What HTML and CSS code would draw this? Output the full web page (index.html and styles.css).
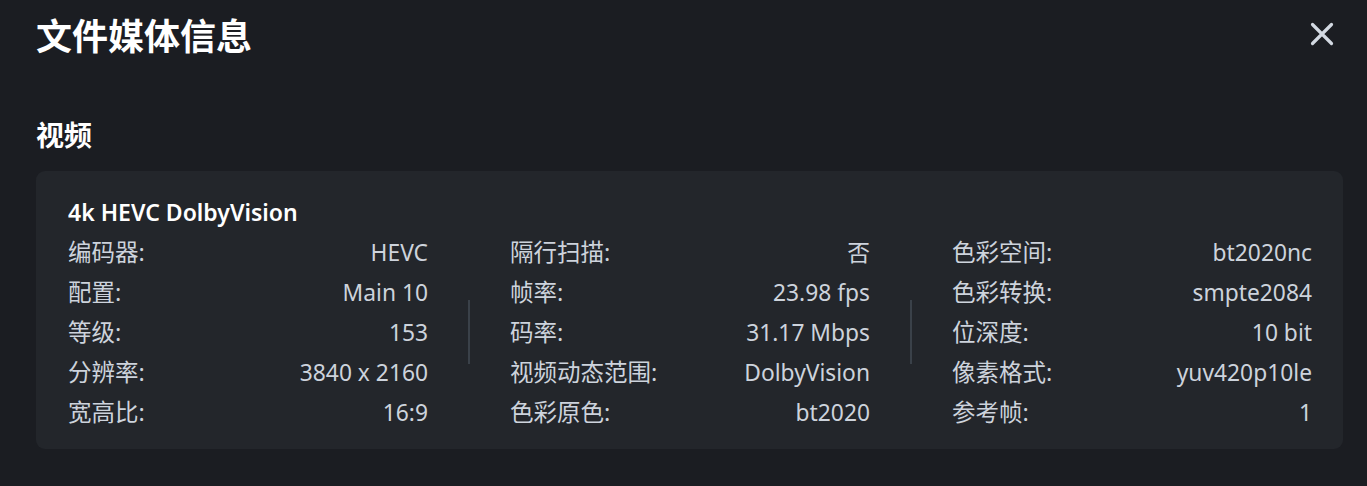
FILE: index.html
```html
<!DOCTYPE html>
<html lang="zh-CN">
<head>
<meta charset="utf-8">
<title>文件媒体信息</title>
<link rel="stylesheet" href="styles.css">
</head>
<body>
<div class="dialog">
  <header class="header">
    <h1 class="title">文件媒体信息</h1>
    <button class="close" aria-label="关闭">
      <svg width="24" height="24" viewBox="0 0 24 24"><path d="M2.5 2.5 L21.5 21.5 M21.5 2.5 L2.5 21.5" stroke="#d3d9e2" stroke-width="3.2" stroke-linecap="round" fill="none"/></svg>
    </button>
  </header>
  <h2 class="section">视频</h2>
  <div class="card">
    <div class="card-title">4k HEVC DolbyVision</div>
    <div class="grid">
      <div class="col">
        <div class="row"><span class="label">编码器:</span><span class="value">HEVC</span></div>
        <div class="row"><span class="label">配置:</span><span class="value">Main 10</span></div>
        <div class="row"><span class="label">等级:</span><span class="value">153</span></div>
        <div class="row"><span class="label">分辨率:</span><span class="value">3840 x 2160</span></div>
        <div class="row"><span class="label">宽高比:</span><span class="value">16:9</span></div>
      </div>
      <div class="divider"></div>
      <div class="col">
        <div class="row"><span class="label">隔行扫描:</span><span class="value">否</span></div>
        <div class="row"><span class="label">帧率:</span><span class="value">23.98 fps</span></div>
        <div class="row"><span class="label">码率:</span><span class="value">31.17 Mbps</span></div>
        <div class="row"><span class="label">视频动态范围:</span><span class="value">DolbyVision</span></div>
        <div class="row"><span class="label">色彩原色:</span><span class="value">bt2020</span></div>
      </div>
      <div class="divider"></div>
      <div class="col">
        <div class="row"><span class="label">色彩空间:</span><span class="value">bt2020nc</span></div>
        <div class="row"><span class="label">色彩转换:</span><span class="value">smpte2084</span></div>
        <div class="row"><span class="label">位深度:</span><span class="value">10 bit</span></div>
        <div class="row"><span class="label">像素格式:</span><span class="value">yuv420p10le</span></div>
        <div class="row"><span class="label">参考帧:</span><span class="value">1</span></div>
      </div>
    </div>
  </div>
</div>
</body>
</html>
```
FILE: styles.css
```css
html, body {
  margin: 0;
  padding: 0;
  background: #1b1d22;
  height: 100%;
}
body {
  font-family: "Noto Sans", "Noto Sans CJK SC", sans-serif;
  color: #cdd3dc;
}
.dialog {
  padding: 10px 24px 0 36px;
}
.header {
  display: flex;
  align-items: center;
  justify-content: space-between;
  height: 48px;
}
.title {
  margin: 0;
  font-size: 36px;
  line-height: 48px;
  font-weight: 700;
  color: #ffffff;
  font-family: "Noto Sans CJK SC", sans-serif;
}
.close {
  background: none;
  border: 0;
  padding: 0;
  margin-right: 9px;
  width: 24px;
  height: 24px;
  display: flex;
  align-items: center;
  justify-content: center;
  cursor: pointer;
}
.section {
  margin: 56px 0 17px 0;
  font-size: 28px;
  line-height: 40px;
  font-weight: 700;
  color: #ffffff;
  font-family: "Noto Sans CJK SC", sans-serif;
}
.card {
  background: #23262b;
  border-radius: 9px;
  padding: 21px 31px 17px 32px;
}
.card-title {
  font-size: 23px;
  line-height: 40px;
  font-weight: 600;
  color: #ffffff;
}
.grid {
  display: grid;
  grid-template-columns: 1fr 2px 1fr 2px 1fr;
  column-gap: 40px;
  align-items: center;
}
.divider {
  width: 2px;
  height: 64px;
  background: #3a4149;
}
.row {
  display: flex;
  justify-content: space-between;
  align-items: baseline;
  height: 40px;
  line-height: 40px;
}
.label {
  font-size: 23.5px;
}
.value {
  font-size: 22.8px;
}
```
